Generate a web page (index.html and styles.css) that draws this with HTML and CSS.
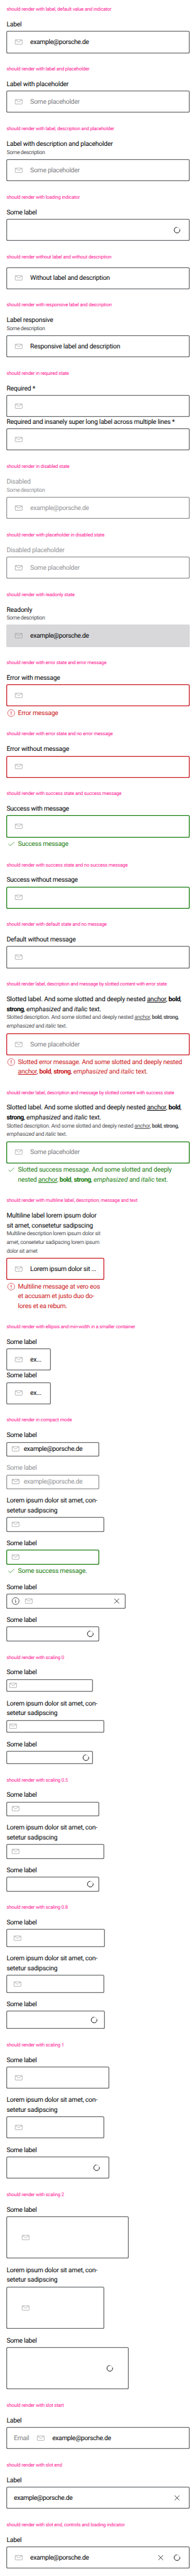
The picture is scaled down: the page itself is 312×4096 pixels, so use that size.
FILE: index.html
```
<!DOCTYPE html>
<html lang="en">
<head>
<meta charset="utf-8">
<title>Input email</title>
<link rel="stylesheet" href="styles.css">
</head>
<body>
<main class="page">
  <svg class="sprite" width="0" height="0">
    <symbol id="mail" viewBox="0 0 24 24"><path d="M4.500 6.500h15a1 1 0 0 1 1 1v9a1 1 0 0 1-1 1h-15a1 1 0 0 1-1-1v-9a1 1 0 0 1 1-1zM4 7l8 5.600 8-5.600" fill="none" stroke="currentColor" stroke-width="1"/></symbol>
    <symbol id="spin" viewBox="0 0 24 24"><circle cx="12" cy="12" r="6.900" fill="none" stroke="#888" stroke-width=".8"/><path d="M18.800 10.500A7 7 0 1 1 11.500 5.100" fill="none" stroke="currentColor" stroke-width="1.300"/></symbol>
    <symbol id="close" viewBox="0 0 24 24"><path d="M6.200 6.200l11.600 11.600M17.800 6.200L6.200 17.800" fill="none" stroke="currentColor" stroke-width="1.150"/></symbol>
    <symbol id="info" viewBox="0 0 24 24"><circle cx="12" cy="12" r="8.500" fill="none" stroke="currentColor"/><path d="M11 10.500h1.200v6M12 7.500v1.300" fill="none" stroke="currentColor" stroke-width="1.100"/></symbol>
    <symbol id="error" viewBox="0 0 24 24"><circle cx="12" cy="12" r="8.500" fill="none" stroke="currentColor"/><path d="M12 7.500v6M12 15v1.600" fill="none" stroke="currentColor" stroke-width="1.500"/></symbol>
    <symbol id="check" viewBox="0 0 24 24"><path d="M5.200 12.300l4.600 4.200L19.700 7.500" fill="none" stroke="currentColor" stroke-width="1.100"/></symbol>
  </svg>
  <section><h2>should render with label, default value and indicator</h2>
    <div class="label">Label</div>
    <div class="box"><svg class="icon mail"><use href="#mail"/></svg><span class="value">example@porsche.de</span></div>
  </section>
  <section><h2>should render with label and placeholder</h2>
    <div class="label">Label with placeholder</div>
    <div class="box"><svg class="icon mail"><use href="#mail"/></svg><span class="hint">Some placeholder</span></div>
  </section>
  <section><h2>should render with label, description and placeholder</h2>
    <div class="label">Label with description and placeholder</div>
    <div class="desc short">Some description</div>
    <div class="box"><svg class="icon mail"><use href="#mail"/></svg><span class="hint">Some placeholder</span></div>
  </section>
  <section><h2>should render with loading indicator</h2>
    <div class="label short">Some label</div>
    <div class="box"><svg class="icon end"><use href="#spin"/></svg></div>
  </section>
  <section><h2>should render without label and without description</h2>
    <div class="box bare"><svg class="icon mail"><use href="#mail"/></svg><span class="text">Without label and description</span></div>
  </section>
  <section><h2>should render with responsive label and description</h2>
    <div class="label">Label responsive</div>
    <div class="desc short">Some description</div>
    <div class="box"><svg class="icon mail"><use href="#mail"/></svg><span class="text">Responsive label and description</span></div>
  </section>
  <section><h2>should render in required state</h2>
    <div class="label">Required *</div>
    <div class="box"><svg class="icon mail"><use href="#mail"/></svg></div>
    <div class="label">Required and insanely super long label across multiple lines *</div>
    <div class="box"><svg class="icon mail"><use href="#mail"/></svg></div>
  </section>
  <section><h2>should render in disabled state</h2>
    <div class="disabled">
      <div class="label">Disabled</div>
      <div class="desc short">Some description</div>
      <div class="box"><svg class="icon mail"><use href="#mail"/></svg><span class="value">example@porsche.de</span></div>
    </div>
  </section>
  <section><h2>should render with placeholder in disabled state</h2>
    <div class="disabled">
      <div class="label">Disabled placeholder</div>
      <div class="box"><svg class="icon mail"><use href="#mail"/></svg><span class="hint">Some placeholder</span></div>
    </div>
  </section>
  <section><h2>should render with readonly state</h2>
    <div class="label">Readonly</div>
    <div class="desc short">Some description</div>
    <div class="box readonly"><svg class="icon mail"><use href="#mail"/></svg><span class="value">example@porsche.de</span></div>
  </section>
  <section><h2>should render with error state and error message</h2>
    <div class="label">Error with message</div>
    <div class="box error"><svg class="icon mail"><use href="#mail"/></svg></div>
    <div class="message error"><svg class="icon"><use href="#error"/></svg><span>Error message</span></div>
  </section>
  <section><h2>should render with error state and no error message</h2>
    <div class="label">Error without message</div>
    <div class="box error"><svg class="icon mail"><use href="#mail"/></svg></div>
  </section>
  <section><h2>should render with success state and success message</h2>
    <div class="label short">Success with message</div>
    <div class="box success"><svg class="icon mail"><use href="#mail"/></svg></div>
    <div class="message success"><svg class="icon"><use href="#check"/></svg><span>Success message</span></div>
  </section>
  <section><h2>should render with success state and no success message</h2>
    <div class="label short">Success without message</div>
    <div class="box success"><svg class="icon mail"><use href="#mail"/></svg></div>
  </section>
  <section><h2>should render with default state and no message</h2>
    <div class="label">Default without message</div>
    <div class="box"><svg class="icon mail"><use href="#mail"/></svg></div>
  </section>
  <section class="slotted"><h2>should render label, description and message by slotted content with error state</h2>
    <div class="label">Slotted label. And some slotted and deeply nested <u>anchor</u>, <b>bold</b>,<br><b>strong</b>, <em>emphasized</em> and <em>italic</em> text.</div>
    <div class="desc roomy">Slotted description. And some slotted and deeply nested <u>anchor</u>, <b>bold</b>, <b>strong</b>,<br><em>emphasized</em> and <em>italic</em> text.</div>
    <div class="box error"><svg class="icon mail"><use href="#mail"/></svg><span class="hint">Some placeholder</span></div>
    <div class="message error"><svg class="icon"><use href="#error"/></svg><span>Slotted error message. And some slotted and deeply nested<br><u>anchor</u>, <b>bold</b>, <b>strong</b>, <em>emphasized</em> and <em>italic</em> text.</span></div>
  </section>
  <section class="slotted"><h2>should render label, description and message by slotted content with success state</h2>
    <div class="label">Slotted label. And some slotted and deeply nested <u>anchor</u>, <b>bold</b>,<br><b>strong</b>, <em>emphasized</em> and <em>italic</em> text.</div>
    <div class="desc">Slotted description. And some slotted and deeply nested <u>anchor</u>, <b>bold</b>, <b>strong</b>,<br><em>emphasized</em> and <em>italic</em> text.</div>
    <div class="box success"><svg class="icon mail"><use href="#mail"/></svg><span class="hint">Some placeholder</span></div>
    <div class="message success"><svg class="icon"><use href="#check"/></svg><span>Slotted success message. And some slotted and deeply<br>nested <u>anchor</u>, <b>bold</b>, <b>strong</b>, <em>emphasized</em> and <em>italic</em> text.</span></div>
  </section>
  <section><h2>should render with multiline label, description, message and text</h2>
    <div class="w240">
      <div class="label">Multiline label lorem ipsum dolor<br>sit amet, consetetur sadipscing</div>
      <div class="desc">Multiline description lorem ipsum dolor sit<br>amet, consetetur sadipscing lorem ipsum<br>dolor sit amet</div>
      <div class="box error"><svg class="icon mail"><use href="#mail"/></svg><span class="text">Lorem ipsum dolor sit ...</span></div>
      <div class="message error"><svg class="icon"><use href="#error"/></svg><span>Multiline message at vero eos<br>et accusam et justo duo do-<br>lores et ea rebum.</span></div>
    </div>
  </section>
  <section><h2>should render with ellipsis and min-width in a smaller container</h2>
    <div class="w108">
      <div class="label short">Some label</div>
      <div class="box"><svg class="icon mail"><use href="#mail"/></svg><span class="text">ex...</span></div>
      <div class="label short">Some label</div>
      <div class="box"><svg class="icon mail"><use href="#mail"/></svg><span class="text">ex...</span></div>
    </div>
  </section>
  <section><h2>should render in compact mode</h2>
    <div class="stack compact">
      <div class="field"><div class="label short">Some label</div>
        <div class="box"><svg class="icon mail"><use href="#mail"/></svg><span class="value">example@porsche.de</span></div></div>
      <div class="field disabled"><div class="label short">Some label</div>
        <div class="box"><svg class="icon mail"><use href="#mail"/></svg><span class="value">example@porsche.de</span></div></div>
      <div class="field w240"><div class="label">Lorem ipsum dolor sit amet, con-<br>setetur sadipscing</div>
        <div class="box"><svg class="icon mail"><use href="#mail"/></svg></div></div>
      <div class="field"><div class="label short">Some label</div>
        <div class="box success"><svg class="icon mail"><use href="#mail"/></svg></div>
        <div class="message success"><svg class="icon"><use href="#check"/></svg><span>Some success message.</span></div></div>
      <div class="field w291"><div class="label short">Some label</div>
        <div class="box"><svg class="icon"><use href="#info"/></svg><svg class="icon mail"><use href="#mail"/></svg><svg class="icon end"><use href="#close"/></svg></div></div>
      <div class="field"><div class="label short">Some label</div>
        <div class="box"><svg class="icon end"><use href="#spin"/></svg></div></div>
    </div>
  </section>
  <section><h2>should render with scaling 0</h2>
    <div class="stack scale-0">
      <div class="field"><div class="label short">Some label</div>
        <div class="box"><svg class="icon mail"><use href="#mail"/></svg></div></div>
      <div class="field w240"><div class="label">Lorem ipsum dolor sit amet, con-<br>setetur sadipscing</div>
        <div class="box"><svg class="icon mail"><use href="#mail"/></svg></div></div>
      <div class="field"><div class="label short">Some label</div>
        <div class="box"><svg class="icon end"><use href="#spin"/></svg></div></div>
    </div>
  </section>
  <section><h2>should render with scaling 0.5</h2>
    <div class="stack compact">
      <div class="field"><div class="label short">Some label</div>
        <div class="box"><svg class="icon mail"><use href="#mail"/></svg></div></div>
      <div class="field w240"><div class="label">Lorem ipsum dolor sit amet, con-<br>setetur sadipscing</div>
        <div class="box"><svg class="icon mail"><use href="#mail"/></svg></div></div>
      <div class="field"><div class="label short">Some label</div>
        <div class="box"><svg class="icon end"><use href="#spin"/></svg></div></div>
    </div>
  </section>
  <section><h2>should render with scaling 0.8</h2>
    <div class="stack scale-08">
      <div class="field"><div class="label short">Some label</div>
        <div class="box"><svg class="icon mail"><use href="#mail"/></svg></div></div>
      <div class="field w240"><div class="label">Lorem ipsum dolor sit amet, con-<br>setetur sadipscing</div>
        <div class="box"><svg class="icon mail"><use href="#mail"/></svg></div></div>
      <div class="field"><div class="label short">Some label</div>
        <div class="box"><svg class="icon end"><use href="#spin"/></svg></div></div>
    </div>
  </section>
  <section><h2>should render with scaling 1</h2>
    <div class="stack scale-1">
      <div class="field"><div class="label short">Some label</div>
        <div class="box"><svg class="icon mail"><use href="#mail"/></svg></div></div>
      <div class="field w240"><div class="label">Lorem ipsum dolor sit amet, con-<br>setetur sadipscing</div>
        <div class="box"><svg class="icon mail"><use href="#mail"/></svg></div></div>
      <div class="field"><div class="label short">Some label</div>
        <div class="box"><svg class="icon end"><use href="#spin"/></svg></div></div>
    </div>
  </section>
  <section><h2>should render with scaling 2</h2>
    <div class="stack scale-2">
      <div class="field"><div class="label short">Some label</div>
        <div class="box"><svg class="icon mail"><use href="#mail"/></svg></div></div>
      <div class="field w240"><div class="label">Lorem ipsum dolor sit amet, con-<br>setetur sadipscing</div>
        <div class="box"><svg class="icon mail"><use href="#mail"/></svg></div></div>
      <div class="field"><div class="label short">Some label</div>
        <div class="box"><svg class="icon end"><use href="#spin"/></svg></div></div>
    </div>
  </section>
  <section><h2>should render with slot start</h2>
    <div class="label">Label</div>
    <div class="box"><span class="hint prefix">Email</span><svg class="icon mail"><use href="#mail"/></svg><span class="value">example@porsche.de</span></div>
  </section>
  <section><h2>should render with slot end</h2>
    <div class="label">Label</div>
    <div class="box"><span class="value">example@porsche.de</span><svg class="icon end"><use href="#close"/></svg></div>
  </section>
  <section><h2>should render with slot end, controls and loading indicator</h2>
    <div class="label">Label</div>
    <div class="box"><svg class="icon mail"><use href="#mail"/></svg><span class="value">example@porsche.de</span><svg class="icon end"><use href="#close"/></svg><svg class="icon"><use href="#spin"/></svg></div>
  </section>
</main>
</body>
</html>
```
FILE: styles.css
```
* { box-sizing: border-box; }

body {
  margin: 0;
  background: #fff;
}

.sprite { position: absolute; }

.page {
  width: 479.7px;
  zoom: .65035;
  font: 16px/24px Roboto, "Noto Sans", sans-serif;
  letter-spacing: -.39px;
  text-rendering: geometricPrecision;
  color: #010205;
  white-space: nowrap;
  --pad-y: 13px;
  --pad-x: 16px;
  --gap: 16px;
  --line: #6b6d70;
}

section { padding: 16px; }

h2 {
  margin: 0 0 16px;
  font-size: 12px;
  font-weight: 400;
  line-height: 16.05px;
  letter-spacing: -.31px;
  color: #ff1493;
}

.label { letter-spacing: -.35px; }
.label.short { letter-spacing: -.51px; }

.desc {
  font-size: 13.5px;
  line-height: 21px;
  letter-spacing: -.52px;
  color: #535457;
}
.desc.short { letter-spacing: -.7px; }
.desc.roomy { padding-bottom: 1px; }

.slotted h2 { letter-spacing: -.39px; }
.slotted .label { letter-spacing: -.3px; }
.slotted .desc { letter-spacing: -.5px; }
b { letter-spacing: -.7px; }
em { letter-spacing: 0; }
.desc em { letter-spacing: -.25px; }

.box {
  display: flex;
  align-items: center;
  gap: var(--gap);
  height: calc(28px + 2 * var(--pad-y));
  margin-top: 4px;
  padding: 0 calc(var(--pad-x) + 2px);
  border-radius: 4px;
  box-shadow: inset 0 0 0 2px var(--line);
}
.box.bare { margin-top: 0; }
.box.readonly { background: #d8d8db; --line: #d8d8db; }
.box.error { --line: #cc1922; }
.box.success { --line: #197e10; }

.icon { flex: none; width: 24px; height: 24px; }
.icon.mail { color: #8f9093; }
.icon.end { margin-left: auto; }

.value { letter-spacing: -.57px; }
.text { letter-spacing: -.42px; }
.hint { letter-spacing: -.46px; color: #808083; }
.prefix { width: 38px; }

.disabled { --line: #949598; }
.disabled, .disabled .desc, .disabled .hint { color: #949598; }
.disabled .icon.mail { color: #808184; }

.message {
  display: flex;
  gap: 4px;
  margin-top: 4px;
}
.message.error { color: #cc1922; }
.message.success { color: #197e10; }

.stack {
  display: flex;
  flex-direction: column;
  align-items: flex-start;
  gap: 16px;
}
.field { width: var(--field-width); }
.compact { --pad-y: 4px; --pad-x: 8px; --gap: 8px; --field-width: 227px; }
.scale-0 { --pad-y: 2px; --pad-x: 2px; --gap: 2px; --field-width: 211px; }
.scale-08 { --pad-y: 8px; --pad-x: 13px; --field-width: 241px; }
.scale-1 { --field-width: 251px; }
.scale-2 { --pad-y: 38px; --pad-x: 32px; --field-width: 299px; }

.w108 { width: 108px; }
.w240 { width: 240px; }
.w291 { width: 291px; }
```
